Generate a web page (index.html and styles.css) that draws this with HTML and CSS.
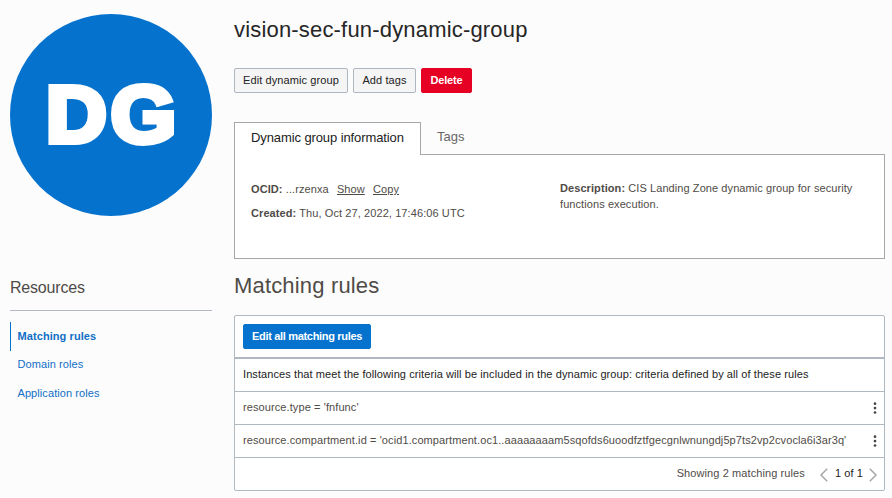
FILE: index.html
```html
<!DOCTYPE html>
<html lang="en">
<head>
<meta charset="utf-8">
<title>vision-sec-fun-dynamic-group</title>
<link rel="stylesheet" href="styles.css">
</head>
<body>
<div class="page">
  <aside class="sidebar">
    <div class="avatar"><span class="avatar-text">DG</span></div>
    <h2 class="side-title"><span>Resources</span></h2>
    <nav class="side-nav">
      <a class="side-link active"><span>Matching rules</span></a>
      <a class="side-link"><span>Domain roles</span></a>
      <a class="side-link"><span>Application roles</span></a>
    </nav>
  </aside>
  <main class="main">
    <h1 class="title"><span>vision-sec-fun-dynamic-group</span></h1>
    <div class="actions">
      <button class="btn edit">Edit dynamic group</button>
      <button class="btn tags">Add tags</button>
      <button class="btn danger">Delete</button>
    </div>
    <div class="tabs">
      <div class="tab selected"><span>Dynamic group information</span></div>
      <div class="tab"><span>Tags</span></div>
    </div>
    <section class="panel">
      <div class="col ids">
        <p class="field ocid"><b>OCID:</b> ...rzenxa <a class="show">Show</a> <a class="copy">Copy</a></p>
        <p class="field"><b>Created:</b> Thu, Oct 27, 2022, 17:46:06 UTC</p>
      </div>
      <div class="col desc">
        <p class="field"><b>Description:</b> CIS Landing Zone dynamic group for security<br>functions execution.</p>
      </div>
    </section>
    <h2 class="section-title"><span>Matching rules</span></h2>
    <section class="rules">
      <div class="toolbar"><button class="btn primary">Edit all matching rules</button></div>
      <div class="row head"><span class="intro">Instances that meet the following criteria will be included in the dynamic group: criteria defined by all of these rules</span></div>
      <div class="row"><span>resource.type = 'fnfunc'</span>
        <svg class="kebab" width="4" height="12" viewBox="0 0 4 12"><circle cx="2" cy="1.7" r="1.35"/><circle cx="2" cy="6.1" r="1.35"/><circle cx="2" cy="10.5" r="1.35"/></svg></div>
      <div class="row"><span class="rule-long">resource.compartment.id = 'ocid1.compartment.oc1..aaaaaaaam5sqofds6uoodfztfgecgnlwnungdj5p7ts2vp2cvocla6i3ar3q'</span>
        <svg class="kebab" width="4" height="12" viewBox="0 0 4 12"><circle cx="2" cy="1.7" r="1.35"/><circle cx="2" cy="6.1" r="1.35"/><circle cx="2" cy="10.5" r="1.35"/></svg></div>
      <div class="row footer">
        <span class="showing">Showing 2 matching rules</span>
        <svg class="chevron" width="8" height="14" viewBox="0 0 8 14"><path d="M7.2 .8L1 7l6.2 6.2"/></svg>
        <span class="count">1 of 1</span>
        <svg class="chevron" width="8" height="14" viewBox="0 0 8 14"><path d="M.8 .8L7 7L.8 13.2"/></svg>
      </div>
    </section>
  </main>
</div>
</body>
</html>
```
FILE: styles.css
```css
* { box-sizing: border-box; }
body {
  margin: 0;
  background: #fcfcfc;
  font: 11px/16px "Liberation Sans", Arial, sans-serif;
  color: #4f4b47;
}
h1, h2, p { margin: 0; font-weight: 400; }
.page { display: flex; height: 498px; padding-left: 10px; overflow: hidden; }
.sidebar { width: 202px; margin-right: 22px; padding-top: 14px; }
.avatar {
  display: flex; align-items: center; justify-content: center;
  width: 202px; height: 202px; border-radius: 50%; background: #0572ce;
}
.avatar-text {
  padding-left: 4px; font: 700 80px/100px "Liberation Sans", Arial, sans-serif; color: #fff;
  letter-spacing: 4px; -webkit-text-stroke: 6px #fff; transform: scaleX(1.05);
}
.side-title {
  height: 95px; padding-top: 62px; border-bottom: 1px solid #b3b7c3;
  font-size: 16px; line-height: 20px; letter-spacing: -.2px;
}
.side-nav { padding-top: 11px; }
.side-link {
  display: flex; align-items: center; height: 28.5px; padding: 0 0 2px 7.5px;
  color: #106fc6; letter-spacing: .08px;
}
.side-link.active {
  height: 29px; padding-left: 6.5px; border-left: 1px solid #0572ce; font-weight: 700;
}
.main { width: 651px; }
.title { height: 67px; padding-top: 16px; font-size: 22px; line-height: 28px; color: #262626; letter-spacing: .18px; }
.actions { display: flex; gap: 5px; height: 55px; padding-top: 1px; }
.btn {
  height: 25px; padding: 0 0 2px; border: 1px solid #aeb6c0; border-radius: 2px;
  background: #f5f5f5; color: #222; font: 11px/16px "Liberation Sans", Arial, sans-serif;
  white-space: nowrap; letter-spacing: .1px;
}
.edit { width: 114px; }
.tags { width: 63px; }
.danger { width: 51px; background: #e60023; border-color: #e60023; color: #fff; font-weight: 700; letter-spacing: -.15px; }
.primary { width: 128px; background: #0572ce; border-color: #0572ce; color: #fff; font-weight: 700; letter-spacing: -.32px; }
.tabs { display: flex; height: 32px; }
.tab { padding: 6px 16px 0; font-size: 13px; line-height: 18px; color: #666; }
.tab.selected {
  position: relative; z-index: 1; width: 187px; height: 33px;
  border: 1px solid #a6a7a8; border-bottom: 0; background: #fff; color: #222;
  white-space: nowrap; letter-spacing: -.1px;
}
.panel {
  display: flex; height: 105px; padding: 25px 16px 0; border: 1px solid #a6a7a8;
  background: #fff; letter-spacing: .09px;
}
.ids { width: 309px; padding-top: 1px; }
.desc { letter-spacing: .08px; }
.field { height: 24px; white-space: nowrap; }
.field a { text-decoration: underline; }
.show { margin-left: 5px; }
.copy { margin-left: 5px; }
.section-title { height: 56px; padding-top: 13px; font-size: 22px; line-height: 28px; letter-spacing: .17px; }
.rules { border: 1px solid #b0b8c1; border-radius: 2px; background: #fff; height: 176px; }
.toolbar { height: 43px; padding: 8px; border-bottom: 2px solid #b0b8c1; }
.row {
  display: flex; align-items: center; justify-content: space-between; height: 33px;
  padding: 0 8px; border-bottom: 1px solid #b0b8c1; white-space: nowrap; letter-spacing: .095px;
}
.row span { padding-bottom: 2px; }
.row.head { color: #222; letter-spacing: .086px; }
.kebab { fill: #444; margin-right: -1px; }
.row.footer { justify-content: flex-end; height: 32px; padding-right: 7px; border-bottom: 0; }
.showing { margin-right: 15px; }
.count { margin: 0 6px 0 7px; color: #222; }
.chevron { fill: none; stroke: #a6a6a6; stroke-width: 1.5; margin-top: 2px; }
```
